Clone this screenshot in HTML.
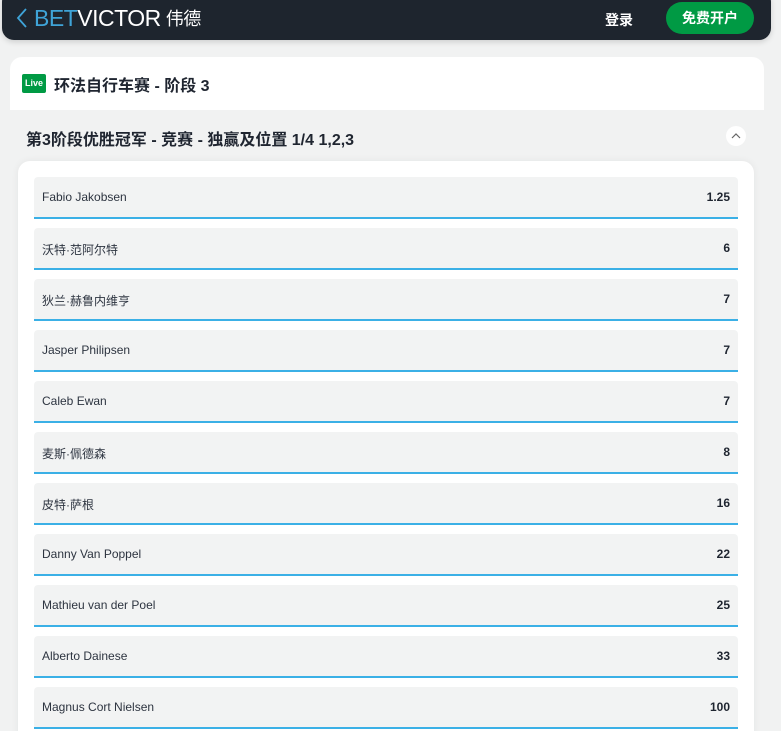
<!DOCTYPE html>
<html><head><meta charset="utf-8"><style>
*{box-sizing:border-box;margin:0;padding:0}
html,body{width:781px;height:731px;overflow:hidden}
body{background:#f1f2f2;font-family:"Liberation Sans","Noto Sans CJK SC",sans-serif;color:#1f2530;position:relative}
.hdr{position:absolute;left:2px;top:-10px;width:769px;height:50px;background:#1e252e;border-radius:12px;box-shadow:0 2px 6px rgba(0,0,0,.15)}
.logo{position:absolute;left:16px;top:4px;height:28px;display:flex;align-items:center;font-size:23px;letter-spacing:-0.5px}
.b{color:#3fa4d8}.v{color:#fff}
.login{position:absolute;left:605px;top:10px;color:#fff;font-weight:bold;font-size:14px}
.join{position:absolute;left:666px;top:2px;width:88px;height:32px;border-radius:16px;background:#009a44;color:#fff;font-weight:bold;font-size:14px;text-align:center;line-height:32px}
.card{position:absolute;left:10px;top:57px;width:754px;height:53px;background:#fff;border-radius:12px 12px 0 0}
.live{position:absolute;left:12px;top:17px;width:24px;height:19px;background:#009a44;border-radius:2px;color:#fff;font-size:9px;font-weight:bold;text-align:center;line-height:19px}
.title{position:absolute;left:44px;top:15px;font-size:16px;font-weight:bold}
.sec{position:absolute;left:26px;top:126px;font-size:16px;font-weight:bold}
.chev{position:absolute;left:726px;top:126px;width:20px;height:20px;border-radius:50%;background:#fff}
.box{position:absolute;left:18px;top:161px;width:736px;height:600px;background:#fff;border-radius:12px;box-shadow:0 0 8px rgba(0,0,0,.06)}
.row{position:absolute;left:16px;width:704px;height:42px;background:#f2f3f3;border-radius:4px 4px 0 0;border-bottom:2px solid #3bb0e6;font-size:12px}
.row span{position:absolute;left:8px;top:13px;color:#2d3440}
.row b{position:absolute;right:8px;top:13px;font-size:12px}
</style></head><body>
<div class="hdr"></div>
<div class="logo"><svg width="12" height="22" viewBox="0 0 12 22"><path d="M10 2 L2 11 L10 20" stroke="#3fa4d8" stroke-width="1.8" fill="none"/></svg><span class="b" style="margin-left:6px">BET</span><span class="v">VICTOR</span><span class="v" style="font-size:18px;margin-left:5px">伟德</span></div>
<div class="login">登录</div>
<div class="join">免费开户</div>
<div class="card"><div class="live">Live</div><div class="title">环法自行车赛 - 阶段 3</div></div>
<div class="sec">第3阶段优胜冠军 - 竞赛 - 独赢及位置 1/4 1,2,3</div>
<div class="chev"><svg width="20" height="20"><path d="M6 12 L10 8 L14 12" stroke="#666" stroke-width="1.2" fill="none"/></svg></div>
<div class="box">
<div class="row" style="top:16px"><span>Fabio Jakobsen</span><b>1.25</b></div>
<div class="row" style="top:67px"><span>沃特·范阿尔特</span><b>6</b></div>
<div class="row" style="top:118px"><span>狄兰·赫鲁内维亨</span><b>7</b></div>
<div class="row" style="top:169px"><span>Jasper Philipsen</span><b>7</b></div>
<div class="row" style="top:220px"><span>Caleb Ewan</span><b>7</b></div>
<div class="row" style="top:271px"><span>麦斯·佩德森</span><b>8</b></div>
<div class="row" style="top:322px"><span>皮特·萨根</span><b>16</b></div>
<div class="row" style="top:373px"><span>Danny Van Poppel</span><b>22</b></div>
<div class="row" style="top:424px"><span>Mathieu van der Poel</span><b>25</b></div>
<div class="row" style="top:475px"><span>Alberto Dainese</span><b>33</b></div>
<div class="row" style="top:526px"><span>Magnus Cort Nielsen</span><b>100</b></div>
</div>
</body></html>
